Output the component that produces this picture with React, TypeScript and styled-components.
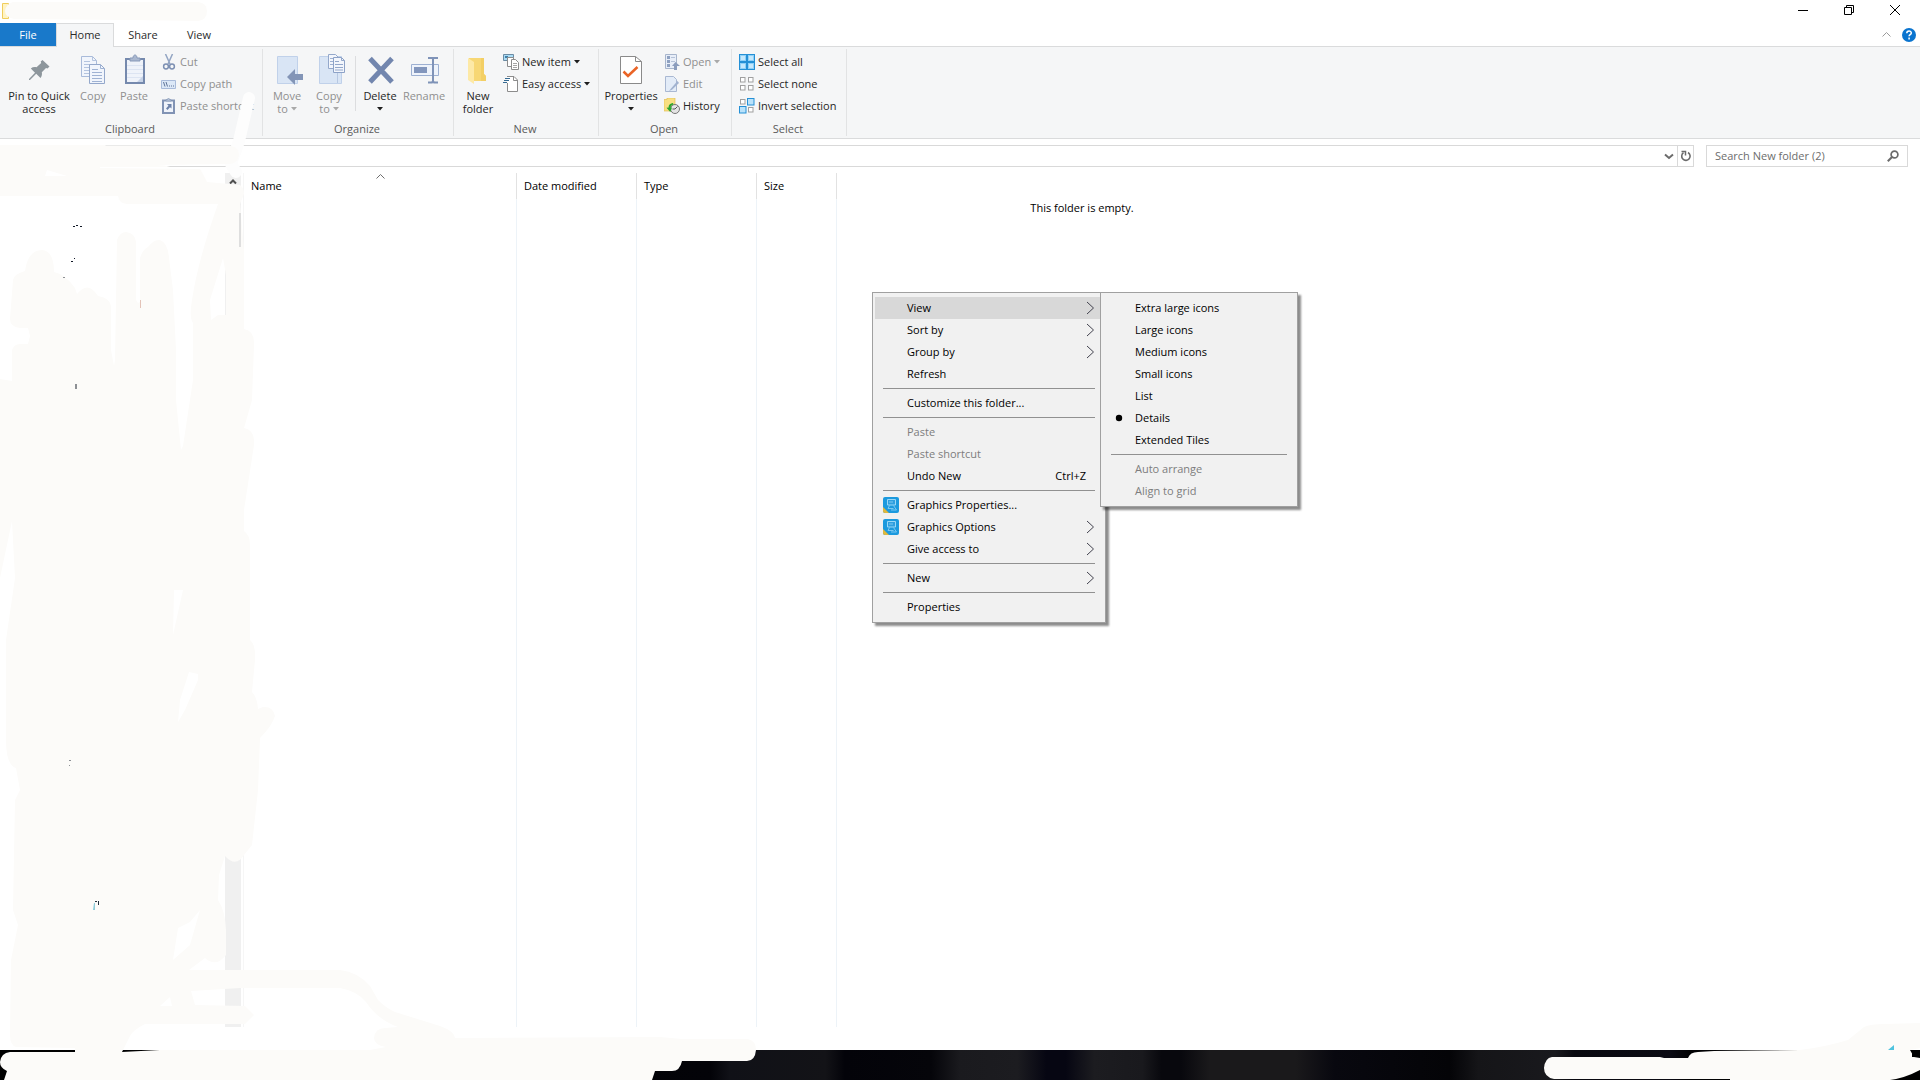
import React from "react";
import styled, { createGlobalStyle } from "styled-components";

const GlobalStyle = createGlobalStyle`
  *, *::before, *::after { box-sizing: border-box; }
  body { margin: 0; background: #fff; }
  body, button, input, table {
    font-family: "Open Sans", "Noto Sans", sans-serif;
    font-size: 11px;
    line-height: 13px;
    color: #000;
  }
`;

const Desktop = styled.div`
  position: relative;
  display: flex;
  flex-direction: column;
  min-height: 100vh;
  overflow: hidden;
  background: #fff;
`;

const PlainButton = styled.button`
  display: inline-flex;
  align-items: center;
  justify-content: center;
  padding: 0;
  border: 0;
  background: none;
  white-space: nowrap;
`;

const Label = styled.span`
  padding-bottom: 2px;
`;

/* ---------- title bar and tabs ---------- */

const TitleBar = styled.header`
  display: flex;
  align-items: flex-start;
  justify-content: space-between;
  height: 23px;
  padding: 0 2px;
`;

const WindowButtons = styled.div`
  display: flex;
`;

const WindowButton = styled(PlainButton)`
  width: 46px;
  height: 20px;
`;

const TabBar = styled.nav`
  display: flex;
  height: 23px;
  align-items: stretch;
`;

const Tab = styled(PlainButton)<{ $kind?: "file" | "active"; $width: number }>`
  width: ${(p) => p.$width}px;
  color: ${(p) => (p.$kind === "file" ? "#fff" : "#2b2b2b")};
  background: ${(p) =>
    p.$kind === "file" ? "#1979ca" : p.$kind === "active" ? "#f5f6f7" : "none"};
  border: 1px solid ${(p) => (p.$kind === "active" ? "#dadbdc" : "transparent")};
  border-bottom: 0;
  background-clip: ${(p) => (p.$kind === "file" ? "border-box" : "padding-box")};
`;

const TabTools = styled.div`
  display: flex;
  align-items: center;
  gap: 10px;
  margin-left: auto;
  padding-right: 3px;
`;

/* ---------- ribbon ---------- */

const Ribbon = styled.section`
  display: flex;
  height: 93px;
  padding: 2px 0;
  background: #f5f6f7;
  border-top: 1px solid #dadbdc;
  border-bottom: 1px solid #dadbdc;
`;

const TabJoin = styled.div`
  width: 56px;
  height: 1px;
  margin: 0 0 -1px 57px;
  background: #f5f6f7;
  z-index: 1;
`;

const Group = styled.div<{ $width: number }>`
  display: flex;
  flex-direction: column;
  flex: none;
  min-width: ${(p) => p.$width}px;
  padding: 2px 3px 0;
  border-right: 1px solid #e2e3e4;
`;

const GroupBody = styled.div`
  display: flex;
  height: 66px;
`;

const GroupLabel = styled.div`
  padding: 5px 2px 0 0;
  text-align: center;
  color: #5a5a5a;
`;

const LargeButton = styled(PlainButton)<{ $width: number }>`
  flex-direction: column;
  justify-content: flex-start;
  gap: 4px;
  width: ${(p) => p.$width}px;
  padding-top: 2px;
  color: #262626;
  &:disabled { color: #8f8f8f; }
`;

const LargeLabel = styled.span`
  display: flex;
  flex-direction: column;
  align-items: center;
`;

const LabelLine = styled.span`
  display: flex;
  align-items: center;
  justify-content: center;
  gap: 3px;
  min-height: 13px;
`;

const Stack = styled.div`
  display: flex;
  flex-direction: column;
  align-items: flex-start;
  padding-left: 4px;
`;

const SmallButton = styled(PlainButton)`
  height: 22px;
  gap: 3px;
  color: #262626;
  &:disabled { color: #8f8f8f; }
`;

const InnerDivider = styled.div`
  width: 1px;
  height: 55px;
  margin: 5px 3px 0 5px;
  background: #dcdddf;
`;

/* ---------- address row ---------- */

const AddressRow = styled.div`
  display: flex;
  gap: 12px;
  padding: 6px 12px 6px 100px;
`;

const Box = styled.div<{ $width?: number }>`
  display: flex;
  align-items: center;
  flex: ${(p) => (p.$width ? "none" : "1")};
  width: ${(p) => (p.$width ? `${p.$width}px` : "auto")};
  height: 22px;
  border: 1px solid #d9d9d9;
  background: #fff;
`;

const TextInput = styled.input`
  flex: 1;
  min-width: 0;
  height: 20px;
  padding: 0 8px 2px;
  border: 0;
  outline: 0;
  background: none;
  &::placeholder { color: #6d6d6d; opacity: 1; }
`;

const BoxButton = styled(PlainButton)<{ $width: number; $line?: boolean }>`
  width: ${(p) => p.$width}px;
  height: 20px;
  border-left: ${(p) => (p.$line ? "1px solid #d9d9d9" : "0")};
`;

/* ---------- main area ---------- */

const Main = styled.main`
  display: flex;
  flex: 1;
  margin-bottom: 23px;
`;

const Sidebar = styled.aside`
  display: flex;
  justify-content: flex-end;
  width: 244px;
  padding-right: 2px;
  border-right: 1px solid #f6f6f6;
`;

const Scrollbar = styled.div`
  display: flex;
  justify-content: center;
  width: 16px;
  padding-top: 6px;
  background: #f0f0f0;
`;

const FileArea = styled.section`
  display: grid;
  flex: 1;
`;

const FileTable = styled.table`
  grid-area: 1 / 1;
  width: 593px;
  height: 100%;
  table-layout: fixed;
  border-collapse: separate;
  border-spacing: 0;
`;

const HeadCell = styled.th<{ $width: number }>`
  width: ${(p) => p.$width}px;
  height: 26px;
  padding: 0 7px;
  border-right: 1px solid #e2e2e2;
  font-weight: 400;
  text-align: left;
`;

const HeadContent = styled.div`
  display: grid;
  align-items: center;
  height: 26px;
`;

const HeadText = styled(Label)`
  grid-area: 1 / 1;
`;

const SortMark = styled.span`
  display: flex;
  grid-area: 1 / 1;
  align-self: start;
  justify-self: center;
  padding-top: 1px;
`;

const BodyCell = styled.td`
  padding: 0;
  border-right: 1px solid #edf3f8;
`;

const EmptyMessage = styled.p`
  grid-area: 1 / 1;
  justify-self: center;
  margin: 28px 0 0;
`;

/* ---------- menus ---------- */

const Menu = styled.div<{ $x: number; $width: number }>`
  position: absolute;
  top: 292px;
  left: ${(p) => p.$x}px;
  width: ${(p) => p.$width}px;
  padding: 4px 2px;
  background: #f1f1f1;
  border: 1px solid #a0a0a0;
  box-shadow: 3px 3px 2px 0 rgba(0, 0, 0, 0.45);
`;

const MenuRow = styled.button<{ $active?: boolean }>`
  display: grid;
  grid-template-columns: 32px 1fr auto 17px;
  align-items: center;
  width: 100%;
  height: 22px;
  padding: 0;
  border: 0;
  text-align: left;
  background: ${(p) => (p.$active ? "#d8d8d8" : "none")};
  &:disabled { color: #7d7d7d; }
`;

const MenuIcon = styled.span`
  display: flex;
  justify-content: center;
`;

const MenuArrow = styled.span`
  grid-column: 4;
  display: flex;
`;

const Shortcut = styled(Label)`
  grid-column: 3;
`;

const MenuLine = styled.hr`
  height: 1px;
  margin: 3px 8px;
  border: 0;
  background: #919191;
`;

/* ---------- taskbar and paint marks ---------- */

const Taskbar = styled.footer`
  height: 30px;
  background: linear-gradient(
    90deg,
    #000 0%, #030308 37%, #101117 38%, #131317 43%, #030309 44%, #05050a 48.5%,
    #1a1a1e 50%, #1c1c20 53%, #060612 54.5%, #060612 55.5%, #1c1c20 57%, #19191d 59.5%,
    #08080d 60.5%, #08080d 61.5%, #1a191b 63%, #1a191b 67.5%, #08080f 69.5%,
    #040407 75.5%, #151518 77%, #19191d 81%, #08080f 82%, #0b0b14 87%, #020204 88%, #000 100%
  );
`;

const PaintLeft = styled.svg`
  position: absolute;
  top: 0;
  left: 0;
  pointer-events: none;
`;

const PaintRight = styled.svg`
  position: absolute;
  right: 0;
  bottom: 0;
  pointer-events: none;
`;

/* ---------- icons ---------- */

const Caret = ({ color = "#1e1e1e" }: { color?: string }) => (
  <svg width="6" height="4" viewBox="0 0 6 4" aria-hidden="true">
    <path d="M0 0h6L3 3.500z" fill={color} />
  </svg>
);

const Big = ({ children }: { children: React.ReactNode }) => (
  <svg width="32" height="32" viewBox="0 0 32 32" fill="none" aria-hidden="true">{children}</svg>
);
const Small = ({ children }: { children: React.ReactNode }) => (
  <svg width="16" height="16" viewBox="0 0 16 16" fill="none" aria-hidden="true">{children}</svg>
);

const PinIcon = () => (
  <Big>
    <path d="M19.500 7l7 6.500-2 2-1.500-.4-4.200 4.200c.5 2.200 0 4-1.300 5.700l-4.300-4.200L7 27H6v-1l6-6.300-4.200-4.200c1.700-1.300 3.500-1.700 5.700-1.200l4.700-4.300-.5-1.500z" fill="#8d969c" />
  </Big>
);
const CopyIcon = () => (
  <Big>
    <path d="M4.500 3.500h11l4 4v16h-15z" fill="#f1f5fc" stroke="#a9bbda" />
    <path d="M15.500 3.500v4h4M7 8.500h6M7 11.500h9M7 14.500h9M7 17.500h9M7 20.500h6" stroke="#b4c4df" />
    <path d="M12.500 11.500h11l4 4v15h-15z" fill="#f1f5fc" stroke="#94a8cb" />
    <path d="M23.500 11.500v4h4M15 16.500h6M15 19.500h10M15 22.500h10M15 25.500h10M15 28.500h10" stroke="#9fb2d3" />
  </Big>
);
const PasteIcon = () => (
  <Big>
    <path d="M7 5h20v26H7z" fill="#7589ad" />
    <path d="M9 7h16v22H9z" fill="#eff3fa" />
    <path d="M9 12.500h16M9 16.500h16M9 20.500h16M9 24.500h16" stroke="#dce4f2" />
    <path d="M12 8V5h3c0-4 4-4 4 0h3v3z" fill="#a9b7cf" stroke="#8799b8" />
    <path d="M19 29h6v-6z" fill="#c7d3e7" />
  </Big>
);
const MoveIcon = () => (
  <Big>
    <path d="M6.500 3.500h20v27h-20z" fill="#d9e5f5" stroke="#c0d1ea" />
    <path d="M16 24l8-8v5h8v6h-8v5z" fill="#8395b7" />
  </Big>
);
const CopyToIcon = () => (
  <Big>
    <path d="M6.500 3.500h22v27h-22z" fill="#d9e5f5" stroke="#c0d1ea" />
    <path d="M24.500 20v10" stroke="#b7c8e2" />
    <path d="M15.500 1.500h7l3 3v11h-10z" fill="#f3f6fc" stroke="#94a8cb" />
    <path d="M17 5.500h4M17 8.500h4M17 11.500h3" stroke="#9fb2d3" />
    <path d="M20.500 4.500h8l3 3v12h-11z" fill="#f3f6fc" stroke="#8da2c7" />
    <path d="M28.500 4.500v3h3M22 8.500h4M22 11.500h8M22 14.500h8M22 17h8" stroke="#94a8cb" />
  </Big>
);
const DeleteIcon = () => (
  <Big>
    <path d="M6 5.500L28 29M28 5.500L6 29" stroke="#7286ae" strokeWidth="5" />
  </Big>
);
const RenameIcon = () => (
  <Big>
    <path d="M3.500 11.500h27v11h-27z" fill="#eef3fb" stroke="#9db0d2" />
    <path d="M6 14h13v6H6z" fill="#8296bd" />
    <path d="M20 5h4.500l.5 1 .5-1H30M25 6v22M20 29.500h4l1-1.500 1 1.500h4" stroke="#7f93b8" strokeWidth="2" />
  </Big>
);
const FolderIcon = () => (
  <Big>
    <path d="M7 5h15v16l2 2v5H8z" fill="#f7d774" />
    <path d="M22 5v16l2 2v5h-5V5z" fill="#f3cf65" />
    <path d="M6 5l6 4v22l-6-4z" fill="#fde9a6" />
  </Big>
);
const PropertiesIcon = () => (
  <Big>
    <path d="M5.500 3.500h15l6 5v22h-21z" fill="#fff" stroke="#8a8a8a" />
    <path d="M20.500 3.500v5h6" stroke="#8a8a8a" />
    <path d="M8.500 18.500l4.500 4.500 9.500-9" stroke="#ea6426" strokeWidth="2.500" />
  </Big>
);
const CutIcon = () => (
  <Small>
    <path d="M4.500 0l4.500 10M11.500 0L7 10" stroke="#93a5c3" strokeWidth="1.500" />
    <circle cx="5" cy="12.500" r="2.400" stroke="#7d90b3" strokeWidth="1.500" />
    <circle cx="11" cy="12.500" r="2.400" stroke="#7d90b3" strokeWidth="1.500" />
  </Small>
);
const PathIcon = () => (
  <Small>
    <path d="M.5 4.500h14v8H.5z" fill="#dce8f7" stroke="#a9bbda" />
    <path d="M2.500 6l1.500 4.500M5 6l1.500 4.500M8 10h1M10 10h1M12 10h1" stroke="#5f7398" />
  </Small>
);
const ShortcutIcon = () => (
  <Small>
    <path d="M1 1.500h13V16H1z" fill="#8193b4" />
    <path d="M3 3.500h9v10.500H3z" fill="#eff3fa" />
    <path d="M5 3V1.500h1.500C6.500-.3 8.500-.3 8.500 1.500H10V3z" fill="#b5c2d8" stroke="#8193b4" strokeWidth=".6" />
    <path d="M6 6h4.500v4.500L9 9.200 6.500 12 5 10.500 7.500 7.700z" fill="#6d82a9" />
  </Small>
);
const NewItemIcon = () => (
  <Small>
    <path d="M.5.5h10v6H.5z" fill="#a9dbf5" stroke="#6b8ba3" />
    <path d="M2 2h3v2H2z" fill="#3f7fa8" />
    <path d="M4.500 3.500h6v9h-6z" fill="#fff" stroke="#8c8c8c" />
    <path d="M8.500 5.500h4l3 3v7h-7z" fill="#fff" stroke="#8c8c8c" />
    <path d="M10 9.500h4M10 11.500h4M10 13.500h4" stroke="#a5a5a5" />
  </Small>
);
const EasyIcon = () => (
  <Small>
    <path d="M4 .5h7l3.500 3.500v11.500h-10V7" fill="#fff" stroke="#8c8c8c" />
    <path d="M10.500.5v4h4" stroke="#8c8c8c" />
    <path d="M2 2.500h5M1 4.500h5M0 6.500h4" stroke="#356a92" />
  </Small>
);
const OpenIcon = () => (
  <Small>
    <path d="M1.500.5h11v14h-11z" fill="#e8eef8" stroke="#a7b5cc" />
    <path d="M3 2h3v3H3zM3 6h3v3H3zM3 10h3v3H3z" fill="#8ea1c1" />
    <path d="M7 3.500h4M7 7.500h4" stroke="#b5c2d8" />
    <path d="M11.500 8L16 12h-3v4h-3v-4H8z" fill="#8b9dbd" />
  </Small>
);
const EditIcon = () => (
  <Small>
    <path d="M1.500.5h8l3 3v12h-11z" fill="#e3ecf8" stroke="#a9b8d2" />
    <path d="M13.500 5L7 12.500 5 15l3-1.300L15 7z" fill="#a2b3d0" />
  </Small>
);
const HistoryIcon = () => (
  <Small>
    <path d="M0 1.500h3V0h8v13H0z" fill="#f8df82" stroke="#e4be54" strokeWidth=".7" />
    <circle cx="11" cy="11" r="4.500" fill="#e4e4e4" stroke="#777" />
    <path d="M11 11l2.500-2.500M11 11H8.500" stroke="#555" />
    <path d="M9 5C5.500 5.500 4.500 7.500 4.700 9.500L2.500 9.700 6.300 14 8 9.500H6.700C6.700 8 7.500 7 9.500 6.500z" fill="#2ba52f" />
  </Small>
);
const Tile = ({ x, y, on }: { x: number; y: number; on?: boolean }) => (
  <rect x={x + 0.5} y={y + 0.5} width={on ? 6.500 : 4.500} height={on ? 6.500 : 4.500} fill={on ? "#b9e2fa" : "#fff"} stroke={on ? "#2490d6" : "#a0a0a0"} />
);
const SelectAllIcon = () => (
  <Small><path d="M0 0h16v16H0z" fill="#2490d6" /><path d="M1 1h6v6H1zM9 1h6v6H9zM1 9h6v6H1zM9 9h6v6H9z" fill="#8fd0f7" /><path d="M2 2h4v4H2zM10 2h4v4h-4zM2 10h4v4H2zM10 10h4v4h-4z" fill="#c5e8fc" /></Small>
);
const SelectNoneIcon = () => (
  <Small><Tile x={1} y={1} /><Tile x={9} y={1} /><Tile x={1} y={9} /><Tile x={9} y={9} /></Small>
);
const InvertIcon = () => (
  <Small><Tile x={1} y={1} /><Tile x={8} y={0} on /><Tile x={0} y={8} on /><Tile x={9} y={9} /></Small>
);
const GraphicsIcon = () => (
  <Small>
    <rect x="0" y="0" width="16" height="16" rx="2" fill="#1c9ade" />
    <path d="M4.500 2.500h8v5.500h-8z" fill="#2f9fdf" stroke="#9ad8f6" />
    <path d="M6 5h4M6.500 8.500L5 11.500h5.500M10.500 8.500l3 4.500H8" stroke="#86cdf3" strokeWidth=".9" />
    <path d="M0 10l6 6H2a2 2 0 0 1-2-2z" fill="#e0b83c" />
  </Small>
);
const Chevron = () => (
  <svg width="9" height="14" viewBox="0 0 9 14" fill="none" aria-hidden="true">
    <path d="M1 1l6.500 6L1 13" stroke="#43434f" />
  </svg>
);

/* ---------- content ---------- */

type LargeProps = {
  icon: React.ReactNode;
  lines: string[];
  width: number;
  caret?: boolean;
  disabled?: boolean;
};

const Large = ({ icon, lines, width, caret, disabled }: LargeProps) => (
  <LargeButton $width={width} disabled={disabled}>
    {icon}
    <LargeLabel>
      {lines.map((line, i) => (
        <LabelLine key={i}>
          {line}
          {caret && i === lines.length - 1 && <Caret color={disabled ? "#a9a9a9" : "#1e1e1e"} />}
        </LabelLine>
      ))}
    </LargeLabel>
  </LargeButton>
);

type SmallProps = { icon: React.ReactNode; label: string; caret?: boolean; disabled?: boolean };

const Compact = ({ icon, label, caret, disabled }: SmallProps) => (
  <SmallButton disabled={disabled}>
    {icon}
    <Label>{label}</Label>
    {caret && <Caret color={disabled ? "#a9a9a9" : "#1e1e1e"} />}
  </SmallButton>
);

type Entry = {
  label: string;
  icon?: boolean;
  arrow?: boolean;
  active?: boolean;
  disabled?: boolean;
  bullet?: boolean;
  shortcut?: string;
} | null;

const mainMenu: Entry[] = [
  { label: "View", arrow: true, active: true },
  { label: "Sort by", arrow: true },
  { label: "Group by", arrow: true },
  { label: "Refresh" },
  null,
  { label: "Customize this folder..." },
  null,
  { label: "Paste", disabled: true },
  { label: "Paste shortcut", disabled: true },
  { label: "Undo New", shortcut: "Ctrl+Z" },
  null,
  { label: "Graphics Properties...", icon: true },
  { label: "Graphics Options", icon: true, arrow: true },
  { label: "Give access to", arrow: true },
  null,
  { label: "New", arrow: true },
  null,
  { label: "Properties" },
];

const viewMenu: Entry[] = [
  { label: "Extra large icons" },
  { label: "Large icons" },
  { label: "Medium icons" },
  { label: "Small icons" },
  { label: "List" },
  { label: "Details", bullet: true },
  { label: "Extended Tiles" },
  null,
  { label: "Auto arrange", disabled: true },
  { label: "Align to grid", disabled: true },
];

const MenuEntries = ({ entries }: { entries: Entry[] }) => (
  <>
    {entries.map((e, i) =>
      e === null ? (
        <MenuLine key={i} />
      ) : (
        <MenuRow key={i} role="menuitem" $active={e.active} disabled={e.disabled}>
          <MenuIcon>
            {e.icon && <GraphicsIcon />}
            {e.bullet && (
              <svg width="8" height="8" viewBox="0 0 8 8" aria-hidden="true">
                <circle cx="4" cy="4" r="3.200" fill="#000" />
              </svg>
            )}
          </MenuIcon>
          <Label>{e.label}</Label>
          {e.shortcut && <Shortcut>{e.shortcut}</Shortcut>}
          {e.arrow && <MenuArrow><Chevron /></MenuArrow>}
        </MenuRow>
      )
    )}
  </>
);

const columns = [
  { name: "Name", width: 273, sorted: true },
  { name: "Date modified", width: 120 },
  { name: "Type", width: 120 },
  { name: "Size", width: 80 },
];

const brush = "#fcfbf9";

const LeftMarks = () => (
  <PaintLeft width="760" height="1080" viewBox="0 0 760 1080" fill={brush} aria-hidden="true">
    <path d="M13 2H198Q207 3 207 11Q207 20 198 21L130 20 14 19Q5 17 5 11Q6 4 13 2z" />
    <path d="M249 98L239 141 231 164 236 172" fill="none" stroke="#fdfdfd" strokeWidth="12" strokeLinecap="round" strokeLinejoin="round" />
    <path d="M0 145L105 145 106 145.400H230Q239 147 239 155 238 163 230 164L155 165Q166 165 170 167H100V168L200 169 204 176L207 182 240 185Q244 188 244 194L240 204H127Q119 203 118 196H0z" />
    <path
      fillRule="evenodd"
      d="M0 379L12 381V350Q14 344 20 344L28 344 30 336 28 328H20Q10 327 10 319L13 280Q14 274 25 271 28 250 42 250 54 251 54 272 65 274 75 288L77 294Q88 280 98 296 111 298 111 308V350L114 366 115 360 117 240Q120 232 126 232 135 233 136 242V300L138 303 140 302V258Q143 249 148 247 154 239 160 240 168 243 169 258L173 290 176 350V400L181 450 183 446 193 380V323Q189 318 192 300 198 260 218 204H240L244 250V329Q255 331 254 345L252 400 244 428Q255 430 254 445L244 510V531Q250 535 250 545V640Q256 645 255 660L252 692Q257 697 258 709L263 707Q273 706 275 716 272 726 260 738L258 790 252 845 244 855Q236 868 225 856L219 875 218 900Q225 910 226 930V955Q216 968 205 958L189 970H340Q358 972 370 986L378 1000Q386 1008 395 1012L440 1026Q454 1031 455 1038L660 1037 682 1039H748Q756 1041 756 1050 755 1061 747 1061H682Q680 1071 672 1071H655L652 1080H4L7 1071Q0 1068 0 1062 1 1053 10 1052H75V1048L16 1047Q10 1045 10 1035L11 960 18 925 13 910 15 800 20 790 16 768Q6 765 6 740V640L15 578 12 521 0 578zM223 258L210 300 211 320 218 315H226V275zM174 590L173 635 183 590zM189 672L180 700 178 722 185 710 198 680 198 674zM200 910L190 922 178 928 173 960 190 945zM170 997L160 1006H172zM191 991L195 1005 245 1006 254 1015 245 1024H145Q133 1030 130 1036L122 1052 160 1050 370 1050 386 1047Q374 1045 374 1038 375 1028 385 1028L398 1027Q378 1020 366 1002 357 991 340 988H240z"
    />
    <path d="M75 1050h19v2H75zM97 1050h25v2H97z" />
    <path d="M45 176l2-6 20 6z" fill="#fff" />
    <path d="M239 213h2v34h-2z" fill="#dedede" />
    <path d="M73 226h2v1h-2zM76 225h2v1h-2zM80 226h2v1h-2zM71 261h2v1h-2zM74 258h1v1h-1z" fill="#111827" />
    <path d="M63 277h2v1h-2zM75 384h2v5h-2zM69 760h2v1h-2zM69 765h1v1h-1z" fill="#8d9095" />
    <path d="M140 300h1v8h-1z" fill="#e3c3b8" />
    <path d="M95 901h2v1h-2zM98 901h1v4h-1z" fill="#22303d" />
    <path d="M94 903h1v7h-2z" fill="#8fcdda" />
  </PaintLeft>
);

const RightMarks = () => (
  <PaintRight width="380" height="60" viewBox="0 0 380 60" fill={brush} aria-hidden="true">
    <path d="M12 37H120L124 38H148Q150 32 158 32L174 31 260 30Q285 27 308 20L324 7Q330 4 345 4L380 3V28L370 30 374 37 380 38V50Q365 58 350 60H190V59H14Q4 57 4 48 5 38 12 37z" />
    <path d="M368 30h4v7h8v-7z" fill="#000" />
    <path d="M354 25v5h-6z" fill="#4fc3df" />
  </PaintRight>
);

export default function App() {
  return (
    <Desktop>
      <GlobalStyle />
      <TitleBar>
        <svg width="16" height="22" viewBox="0 0 16 22" aria-hidden="true">
          <path d="M.5 3.500h6v15h-6z" fill="#fff3c4" stroke="#f0cd5c" />
        </svg>
        <WindowButtons>
          <WindowButton aria-label="Minimize">
            <svg width="10" height="10" viewBox="0 0 10 10"><path d="M0 5.500h10" stroke="#000" /></svg>
          </WindowButton>
          <WindowButton aria-label="Restore">
            <svg width="10" height="10" viewBox="0 0 10 10" fill="none"><path d="M.5 2.500h7v7h-7zM2.500 2V.5h7v7H8" stroke="#000" /></svg>
          </WindowButton>
          <WindowButton aria-label="Close">
            <svg width="10" height="10" viewBox="0 0 10 10"><path d="M0 0l10 10M10 0L0 10" stroke="#000" /></svg>
          </WindowButton>
        </WindowButtons>
      </TitleBar>

      <TabBar>
        <Tab $kind="file" $width={56}><Label>File</Label></Tab>
        <Tab $kind="active" $width={58}><Label>Home</Label></Tab>
        <Tab $width={58}><Label>Share</Label></Tab>
        <Tab $width={54}><Label>View</Label></Tab>
        <TabTools>
          <PlainButton aria-label="Collapse ribbon">
            <svg width="9" height="5" viewBox="0 0 9 5" fill="none"><path d="M.5 4.500l4-4 4 4" stroke="#9a9a9a" /></svg>
          </PlainButton>
          <PlainButton aria-label="Help">
            <svg width="16" height="16" viewBox="0 0 16 16" fill="none">
              <circle cx="8" cy="8" r="7" fill="#0a74cf" />
              <path d="M5.800 6.200C5.800 3.200 10.300 3.300 10.300 6 10.300 7.700 8.100 7.700 8.100 9.300M8.100 10.600v1.800" stroke="#fff" strokeWidth="1.500" />
            </svg>
          </PlainButton>
        </TabTools>
      </TabBar>

      <TabJoin />
      <Ribbon>
        <Group $width={263}>
          <GroupBody>
            <Large icon={<PinIcon />} lines={["Pin to Quick", "access"]} width={72} />
            <Large icon={<CopyIcon />} lines={["Copy"]} width={36} disabled />
            <Large icon={<PasteIcon />} lines={["Paste"]} width={46} disabled />
            <Stack>
              <Compact icon={<CutIcon />} label="Cut" disabled />
              <Compact icon={<PathIcon />} label="Copy path" disabled />
              <Compact icon={<ShortcutIcon />} label="Paste shortcut" disabled />
            </Stack>
          </GroupBody>
          <GroupLabel>Clipboard</GroupLabel>
        </Group>
        <Group $width={191}>
          <GroupBody>
            <Large icon={<MoveIcon />} lines={["Move", "to"]} width={42} caret disabled />
            <Large icon={<CopyToIcon />} lines={["Copy", "to"]} width={42} caret disabled />
            <InnerDivider />
            <Large icon={<DeleteIcon />} lines={["Delete", ""]} width={42} caret />
            <Large icon={<RenameIcon />} lines={["Rename"]} width={46} disabled />
          </GroupBody>
          <GroupLabel>Organize</GroupLabel>
        </Group>
        <Group $width={145}>
          <GroupBody>
            <Large icon={<FolderIcon />} lines={["New", "folder"]} width={42} />
            <Stack>
              <Compact icon={<NewItemIcon />} label="New item" caret />
              <Compact icon={<EasyIcon />} label="Easy access" caret />
            </Stack>
          </GroupBody>
          <GroupLabel>New</GroupLabel>
        </Group>
        <Group $width={133}>
          <GroupBody>
            <Large icon={<PropertiesIcon />} lines={["Properties", ""]} width={58} caret />
            <Stack>
              <Compact icon={<OpenIcon />} label="Open" caret disabled />
              <Compact icon={<EditIcon />} label="Edit" disabled />
              <Compact icon={<HistoryIcon />} label="History" />
            </Stack>
          </GroupBody>
          <GroupLabel>Open</GroupLabel>
        </Group>
        <Group $width={115}>
          <GroupBody>
            <Stack>
              <Compact icon={<SelectAllIcon />} label="Select all" />
              <Compact icon={<SelectNoneIcon />} label="Select none" />
              <Compact icon={<InvertIcon />} label="Invert selection" />
            </Stack>
          </GroupBody>
          <GroupLabel>Select</GroupLabel>
        </Group>
      </Ribbon>

      <AddressRow>
        <Box>
          <TextInput aria-label="Address" />
          <BoxButton $width={16} aria-label="Previous locations">
            <svg width="10" height="7" viewBox="0 0 10 7" fill="none"><path d="M1 1.500l4 3.500 4-3.500" stroke="#6b6b6b" strokeWidth="2" /></svg>
          </BoxButton>
          <BoxButton $width={16} $line aria-label="Refresh">
            <svg width="12" height="12" viewBox="0 0 12 12" fill="none">
              <path d="M8 2.500a4.200 4.200 0 1 1-4.500.2" stroke="#6b6b6b" strokeWidth="1.600" />
              <path d="M1.500 1.500h4v4" stroke="#6b6b6b" strokeWidth="1.500" />
            </svg>
          </BoxButton>
        </Box>
        <Box $width={202}>
          <TextInput aria-label="Search" placeholder="Search New folder (2)" />
          <BoxButton $width={28} aria-label="Start search">
            <svg width="12" height="12" viewBox="0 0 12 12" fill="none">
              <circle cx="7.500" cy="4.500" r="3.400" stroke="#6b6b6b" strokeWidth="1.700" />
              <path d="M5 7L.8 11.200" stroke="#6b6b6b" strokeWidth="2" />
            </svg>
          </BoxButton>
        </Box>
      </AddressRow>

      <Main>
        <Sidebar>
          <Scrollbar>
            <svg width="8" height="6" viewBox="0 0 8 6" fill="none" aria-hidden="true"><path d="M1 4.500l3-3 3 3" stroke="#505050" strokeWidth="2" /></svg>
          </Scrollbar>
        </Sidebar>
        <FileArea>
          <FileTable>
            <thead>
              <tr>
                {columns.map((c) => (
                  <HeadCell key={c.name} $width={c.width} scope="col">
                    <HeadContent>
                      <HeadText>{c.name}</HeadText>
                      {c.sorted && (
                        <SortMark>
                          <svg width="9" height="5" viewBox="0 0 9 5" fill="none" aria-hidden="true"><path d="M.5 4.500l4-4 4 4" stroke="#6d6d6d" /></svg>
                        </SortMark>
                      )}
                    </HeadContent>
                  </HeadCell>
                ))}
              </tr>
            </thead>
            <tbody>
              <tr>{columns.map((c) => <BodyCell key={c.name} />)}</tr>
            </tbody>
          </FileTable>
          <EmptyMessage>This folder is empty.</EmptyMessage>
        </FileArea>
      </Main>

      <Taskbar />

      <LeftMarks />
      <RightMarks />

      <Menu role="menu" $x={872} $width={234}>
        <MenuEntries entries={mainMenu} />
      </Menu>
      <Menu role="menu" $x={1100} $width={198}>
        <MenuEntries entries={viewMenu} />
      </Menu>
    </Desktop>
  );
}
